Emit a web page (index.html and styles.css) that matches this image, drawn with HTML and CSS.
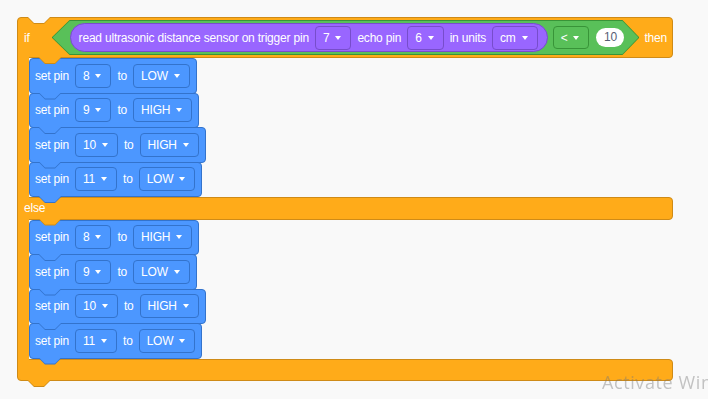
FILE: index.html
```html
<!DOCTYPE html>
<html lang="en">
<head>
  <meta charset="UTF-8" />
  <meta name="viewport" content="width=device-width, initial-scale=1.0"/>
  <title>If ultrasonic blocks</title>
  <link rel="stylesheet" href="styles.css">
</head>
<body>

  <div class="workspace">
    <div class="c-block">

      <div class="c-top">
        <span class="label">if</span>
        <div class="cond">
          <div class="reporter">
            <span class="label">read ultrasonic distance sensor on trigger pin</span>
            <span class="field">7<i class="arrow"></i></span>
            <span class="label">echo pin</span>
            <span class="field">6<i class="arrow"></i></span>
            <span class="label">in units</span>
            <span class="field">cm<i class="arrow"></i></span>
          </div>
          <span class="field op">&lt;<i class="arrow"></i></span>
          <span class="num">10</span>
        </div>
        <span class="label then">then</span>
      </div>

      <div class="c-body">
        <div class="c-arm"></div>
        <div class="stack">
          <div class="stmt">
            <span class="label">set pin</span>
            <span class="field">8<i class="arrow"></i></span>
            <span class="label">to</span>
            <span class="field">LOW<i class="arrow"></i></span>
          </div>
          <div class="stmt">
            <span class="label">set pin</span>
            <span class="field">9<i class="arrow"></i></span>
            <span class="label">to</span>
            <span class="field">HIGH<i class="arrow"></i></span>
          </div>
          <div class="stmt">
            <span class="label">set pin</span>
            <span class="field">10<i class="arrow"></i></span>
            <span class="label">to</span>
            <span class="field">HIGH<i class="arrow"></i></span>
          </div>
          <div class="stmt">
            <span class="label">set pin</span>
            <span class="field">11<i class="arrow"></i></span>
            <span class="label">to</span>
            <span class="field">LOW<i class="arrow"></i></span>
          </div>
        </div>
      </div>

      <div class="c-else">
        <span class="label">else</span>
      </div>

      <div class="c-body">
        <div class="c-arm"></div>
        <div class="stack">
          <div class="stmt">
            <span class="label">set pin</span>
            <span class="field">8<i class="arrow"></i></span>
            <span class="label">to</span>
            <span class="field">HIGH<i class="arrow"></i></span>
          </div>
          <div class="stmt">
            <span class="label">set pin</span>
            <span class="field">9<i class="arrow"></i></span>
            <span class="label">to</span>
            <span class="field">LOW<i class="arrow"></i></span>
          </div>
          <div class="stmt">
            <span class="label">set pin</span>
            <span class="field">10<i class="arrow"></i></span>
            <span class="label">to</span>
            <span class="field">HIGH<i class="arrow"></i></span>
          </div>
          <div class="stmt">
            <span class="label">set pin</span>
            <span class="field">11<i class="arrow"></i></span>
            <span class="label">to</span>
            <span class="field">LOW<i class="arrow"></i></span>
          </div>
        </div>
      </div>

      <div class="c-bottom"></div>
    </div>
  </div>

  <div class="watermark">Activate Windows</div>

</body>
</html>
```

FILE: styles.css
```css
html, body {
  margin: 0;
  padding: 0;
  height: 100%;
  overflow: hidden;
  background: #f9f9f9;
  font-family: "Liberation Sans", Arial, sans-serif;
  font-size: 12px;
  letter-spacing: -0.2px;
  color: #fff;
}

.workspace {
  padding: 17px;
}

.label {
  white-space: nowrap;
}

/* ---- C block (if / else) ---- */

.c-block {
  display: inline-flex;
  flex-direction: column;
}

.c-top {
  position: relative;
  display: flex;
  align-items: center;
  height: 41px;
  box-sizing: border-box;
  padding: 0 5px 0 6px;
  background: #ffab19;
  border: 1px solid #cf8b17;
  border-radius: 4px 4px 4px 0;
}

/* notch cut in the top of the C block */
.c-top::before,
.c-top::after {
  content: "";
  position: absolute;
  top: -1px;
  z-index: 2;
}
.c-top::before {
  left: 9px;
  width: 24px;
  height: 7px;
  background: #cf8b17;
  clip-path: polygon(0 0, 24px 0, 17px 7px, 7px 7px);
}
.c-top::after {
  left: 10px;
  width: 22px;
  height: 6px;
  background: #f9f9f9;
  clip-path: polygon(0 0, 22px 0, 16px 6px, 6px 6px);
}

.then {
  margin-left: 5px;
}

.c-body {
  display: flex;
}

.c-arm {
  position: relative;
  z-index: 1;
  width: 12px;
  margin: -1px 0;
  box-sizing: border-box;
  background: #ffab19;
  border-left: 1px solid #cf8b17;
}

/* tab hanging into the first statement */
.c-arm::before,
.c-arm::after {
  content: "";
  position: absolute;
  top: 0;
  z-index: 2;
}
.c-arm::before {
  left: 20px;
  width: 24px;
  height: 7px;
  background: #cf8b17;
  clip-path: polygon(0 0, 24px 0, 17px 7px, 7px 7px);
}
.c-arm::after {
  left: 21px;
  width: 22px;
  height: 6px;
  background: #ffab19;
  clip-path: polygon(0 0, 22px 0, 16px 6px, 6px 6px);
}

.c-else {
  display: flex;
  align-items: center;
  height: 22.5px;
  box-sizing: border-box;
  padding-left: 6px;
  background: #ffab19;
  border: 1px solid #cf8b17;
  border-radius: 0 4px 4px 0;
}

.c-bottom {
  position: relative;
  height: 22.5px;
  box-sizing: border-box;
  background: #ffab19;
  border: 1px solid #cf8b17;
  border-radius: 0 4px 4px 4px;
}
.c-bottom::before,
.c-bottom::after {
  content: "";
  position: absolute;
  top: 100%;
  z-index: 2;
}
.c-bottom::before {
  left: 9px;
  width: 24px;
  height: 7px;
  background: #cf8b17;
  clip-path: polygon(0 0, 24px 0, 17px 7px, 7px 7px);
}
.c-bottom::after {
  left: 10px;
  width: 22px;
  height: 6px;
  background: #ffab19;
  clip-path: polygon(0 0, 22px 0, 16px 6px, 6px 6px);
}

/* ---- statements ---- */

.stack {
  display: flex;
  flex-direction: column;
  align-items: flex-start;
}

.stmt {
  position: relative;
  display: flex;
  align-items: center;
  gap: 5px;
  height: 35.5px;
  box-sizing: border-box;
  padding: 0 6px 0 5px;
  background: #4c97ff;
  border: 1px solid #3373cc;
  border-radius: 4px;
}
.stmt + .stmt {
  margin-top: -1px;
}
.stmt .label + .field {
  margin-left: 1px;
}
.stmt .field + .label {
  margin-left: 1px;
}

.stmt::before,
.stmt::after {
  content: "";
  position: absolute;
  top: 100%;
  z-index: 2;
}
.stmt::before {
  left: 8px;
  width: 24px;
  height: 7px;
  background: #3373cc;
  clip-path: polygon(0 0, 24px 0, 17px 7px, 7px 7px);
}
.stmt::after {
  left: 9px;
  width: 22px;
  height: 6px;
  background: #4c97ff;
  clip-path: polygon(0 0, 22px 0, 16px 6px, 6px 6px);
}

/* ---- fields ---- */

.field {
  display: inline-flex;
  align-items: center;
  height: 24px;
  box-sizing: border-box;
  padding: 0 9px 0 7px;
  border: 1px solid #3373cc;
  border-radius: 4px;
  white-space: nowrap;
}

.arrow {
  margin-left: 6px;
  width: 0;
  height: 0;
  border-left: 3.5px solid transparent;
  border-right: 3.5px solid transparent;
  border-top: 4px solid #fff;
}

/* ---- condition ---- */

.cond {
  position: relative;
  display: flex;
  align-items: center;
  height: 35px;
  margin-left: 22px;
  padding: 0 15px 0 18px;
  background: #389438;
  clip-path: polygon(18px 0, calc(100% - 17px) 0, 100% 50%, calc(100% - 17px) 100%, 18px 100%, 0 50%);
}
.cond::before {
  content: "";
  position: absolute;
  inset: 1px;
  background: #59c059;
  clip-path: polygon(17px 0, calc(100% - 16px) 0, 100% 50%, calc(100% - 16px) 100%, 17px 100%, 0 50%);
}
.cond > * {
  position: relative;
}

.reporter {
  display: flex;
  align-items: center;
  gap: 6px;
  height: 29px;
  box-sizing: border-box;
  padding: 0 9px 0 8px;
  background: #9966ff;
  border: 1px solid #774dcb;
  border-radius: 15px;
}
.reporter .field {
  border-color: #774dcb;
}

.field.op {
  height: 23px;
  margin-left: 5px;
  border-color: #389438;
}

.num {
  width: 28px;
  height: 19px;
  margin-left: 7px;
  line-height: 19px;
  text-align: center;
  border-radius: 10px;
  background: #fff;
  color: #575e75;
}

.watermark {
  position: fixed;
  left: 602px;
  top: 370px;
  font-family: "Open Sans", sans-serif;
  font-size: 18px;
  letter-spacing: 0.6px;
  color: rgba(120, 120, 120, 0.42);
  white-space: nowrap;
}
```
